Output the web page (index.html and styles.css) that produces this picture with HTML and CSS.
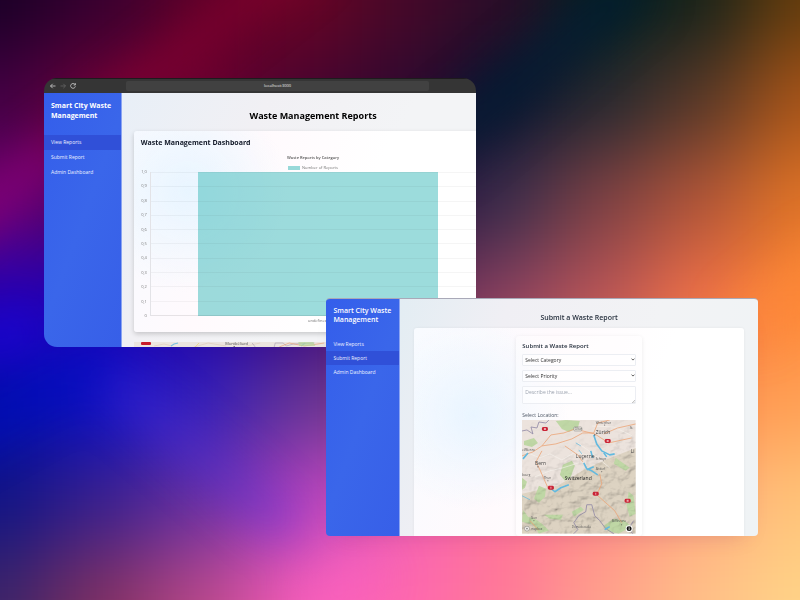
FILE: index.html
```html
<!DOCTYPE html>
<html lang="en">
<head>
<meta charset="utf-8">
<title>Smart City Waste Management</title>
<link rel="stylesheet" href="styles.css">
</head>
<body>
<svg class="wallpaper" viewBox="0 0 800 600" preserveAspectRatio="none" aria-hidden="true">
  <defs>
    <filter id="mesh" filterUnits="userSpaceOnUse" x="-150" y="-150" width="1100" height="900" color-interpolation-filters="sRGB"><feGaussianBlur stdDeviation="38"/></filter>
    <filter id="streak" filterUnits="userSpaceOnUse" x="-150" y="-150" width="1100" height="900" color-interpolation-filters="sRGB"><feGaussianBlur stdDeviation="22"/></filter>
  </defs>
  <g id="cells" filter="url(#mesh)"></g>
  <g filter="url(#streak)" fill="none">
    <path d="M-60 240L310-50" stroke="#8a0030" stroke-width="30" opacity=".75"/>
    <path d="M-40 225L60 150" stroke="#8c0090" stroke-width="30" opacity=".7"/>
    <path d="M-40 345L40 325" stroke="#1c04e0" stroke-width="36" opacity=".7"/>
    <path d="M-60 450L110 355" stroke="#0010c0" stroke-width="28" opacity=".7"/>
    <path d="M110 380L290 530" stroke="#5030e0" stroke-width="34" opacity=".4"/>
    <path d="M430 155L640-20" stroke="#001c34" stroke-width="40" opacity=".85"/>
    <path d="M310 620L370 560" stroke="#ff64c4" stroke-width="50" opacity=".5"/>
    <path d="M740 330L840 250" stroke="#ff8a3a" stroke-width="40" opacity=".6"/>
  </g>
</svg>

<section class="window reports">
  <header class="browser-bar">
    <div class="browser-nav">
      <svg viewBox="0 0 8 8"><path d="M6.500 4H1.500M3.700 1.800L1.500 4L3.700 6.200"/></svg>
      <svg class="dim" viewBox="0 0 8 8"><path d="M1.500 4H6.500M4.300 1.800L6.500 4L4.300 6.200"/></svg>
      <svg viewBox="0 0 8 8"><path d="M6 2.500A2.400 2.400 0 1 0 6.400 4.300M6.400 1.200V3H4.600"/></svg>
    </div>
    <div class="address">localhost:3000</div>
  </header>
  <div class="app">
    <aside class="sidebar">
      <h2>Smart City Waste Management</h2>
      <nav>
        <a href="#" class="active">View Reports</a>
        <a href="#">Submit Report</a>
        <a href="#">Admin Dashboard</a>
      </nav>
    </aside>
    <main class="main">
      <div class="overflowing">
        <h1>Waste Management Reports</h1>
        <div class="card">
          <h3>Waste Management Dashboard</h3>
          <div class="chart-title">Waste Reports by Category</div>
          <div class="legend"><i></i>Number of Reports</div>
          <div class="chart">
            <div class="y-axis"><span>1,0</span><span>0,9</span><span>0,8</span><span>0,7</span><span>0,6</span><span>0,5</span><span>0,4</span><span>0,3</span><span>0,2</span><span>0,1</span><span>0</span></div>
            <div class="plot">
              <div class="bar"></div>
              <div class="lines"><i></i><i></i><i></i><i></i><i></i><i></i><i></i><i></i><i></i><i></i></div>
            </div>
          </div>
          <div class="x-label">undefined</div>
        </div>
        <svg class="map-strip" viewBox="0 0 358 5" preserveAspectRatio="xMinYMin slice">
          <rect width="358" height="5" fill="#ebe5df"/>
          <g fill="none" stroke-width=".6">
            <path d="M20 4L30 2L38 4M60 5L74 1L92 4M112 4L126 1" stroke="#dec9b7"/>
            <path d="M37 4L40 2L44 1M167 4L171 1" stroke="#7bbfdf" stroke-width="1"/>
            <path d="M61 5L65 1" stroke="#e5cb61"/>
            <path d="M118 1L121 5M140 5L141 1L149 1L152 4L159 2L180 1" stroke="#a49bae"/>
            <path d="M145 5L155 1L170 4L190 1" stroke="#e5986b"/>
          </g>
          <path d="M164 0H179L181 4H165Z" fill="#b7d69b" opacity=".7"/>
          <rect x="7" y="0" width="10" height="3" rx="1" fill="#c91c2b"/>
          <text x="91" y="3" class="strip-text">Montbéliard</text>
          <circle cx="100" cy="4.500" r=".6" fill="#333"/>
        </svg>
      </div>
    </main>
  </div>
</section>

<section class="window submit">
  <div class="app">
    <aside class="sidebar">
      <h2>Smart City Waste Management</h2>
      <nav>
        <a href="#">View Reports</a>
        <a href="#" class="active">Submit Report</a>
        <a href="#">Admin Dashboard</a>
      </nav>
    </aside>
    <main class="main">
      <h1>Submit a Waste Report</h1>
      <div class="card">
        <form class="form">
          <h3>Submit a Waste Report</h3>
          <div class="field">
            <select aria-label="Category"><option>Select Category</option></select>
            <svg class="chevron" viewBox="0 0 4 3"><path d="M.5.6L2 2.100L3.500.6"/></svg>
          </div>
          <div class="field">
            <select aria-label="Priority"><option>Select Priority</option></select>
            <svg class="chevron" viewBox="0 0 4 3"><path d="M.5.6L2 2.100L3.500.6"/></svg>
          </div>
          <div class="field">
            <textarea aria-label="Description" placeholder="Describe the issue..."></textarea>
            <svg class="grip" viewBox="0 0 3 3"><path d="M0 3L3 0M1.500 3L3 1.500"/></svg>
          </div>
          <div class="map-label">Select Location:</div>
          <svg class="map" viewBox="0 0 114 114">
            <defs>
              <filter id="relief" x="0" y="0" width="1" height="1">
                <feTurbulence type="fractalNoise" baseFrequency=".09 .12" numOctaves="4" seed="8"/>
                <feDiffuseLighting lighting-color="#fff" surfaceScale="5" diffuseConstant="1.150"><feDistantLight azimuth="225" elevation="58"/></feDiffuseLighting>
              </filter>
              <linearGradient id="fade" x1="0" y1="0" x2=".5" y2="1"><stop offset=".3" stop-color="#fff" stop-opacity=".1"/><stop offset=".65" stop-color="#fff" stop-opacity=".8"/></linearGradient>
              <mask id="alps"><rect width="114" height="114" fill="url(#fade)"/></mask>
            </defs>
            <rect width="114" height="114" fill="#ece3dd"/>
            <path d="M114 28L84 40L62 50L36 66L0 74V114H114Z" fill="#ddd3c2"/>
            <g fill="#bfd7a5">
              <path d="M34 1L44 0L58 1L56 8L47 12L40 9Z"/>
              <path d="M2 21L12 18L16 23L10 27L2 25Z"/>
              <path d="M41 45L50 41L53 46L49 57L43 61L38 55Z"/>
              <path d="M17 66L24 69L23 77L17 83L12 79Z"/>
              <path d="M0 58L5 62L3 68L0 70ZM1 90L6 97L13 99L20 104L27 111L17 114L11 105L0 102Z"/>
              <path d="M22 95L41 95L39 100L28 99ZM50 92L59 87L62 90L52 97Z"/>
              <path d="M107 72L112 76L114 94L108 97L105 86ZM82 106L92 99L103 101L110 107L97 114L87 112ZM94 38L108 48L104 51L92 44Z"/>
            </g>
            <rect width="114" height="114" filter="url(#relief)" mask="url(#alps)" opacity=".42" style="mix-blend-mode:multiply"/>
            <g fill="none" stroke="#f7f3ef" stroke-width=".6">
              <path d="M3 32L18 38L28 34L40 40L54 32L68 36M13 57L28 51L41 48L57 43M56 23L70 33L88 48M70 6L92 7L111 16"/>
            </g>
            <g fill="none" stroke="#eba477" stroke-width=".8">
              <path d="M0 36L11 32L20 26L34 24L50 19L61 13L72 13L76 3L88 0M20 26L29 15L42 13L53 9L73 14M18 50L14 42L20 31M18 50L26 68M61 42L56 35L43 26M73 14L87 23L110 18M82 14L96 8L114 4M78 54L80 64L75 75L84 83L93 91L100 103M8 101L17 111"/>
            </g>
            <g fill="none" stroke="#8e87a5" stroke-width=".8">
              <path d="M0 11L5 10L11 14L9 7L15 8L17 2L24 3L27 0M92 114L84 109L78 101L73 96L70 85L65 85L64 92L57 96L52 103L56 110L52 114M111 114L107 109L112 101"/>
            </g>
            <g fill="none" stroke="#62b9df" stroke-width="1.600" stroke-linejoin="round">
              <path d="M72 15L75 24L80 31L88 35L93 34"/>
              <path d="M62 43L65 49L70 51L76 55M65 50L72 47M69 31L71 38M82 33L85 37M1 39L6 33M27 67L33 72L39 68L47 65M83 110L88 107"/>
              <path d="M54 23L59 26M57 30L60 34M0 76L8 80" stroke-width=".7"/>
            </g>
            <g fill="#ca2436">
              <rect x="20" y="7" width="6" height="4" rx="1.500"/><rect x="83" y="19" width="6" height="4" rx="1.500"/>
              <rect x="26" y="66" width="6" height="4" rx="1.500"/><rect x="71" y="72" width="6" height="4" rx="1.500"/><rect x="103" y="79" width="6" height="4" rx="1.500"/>
            </g>
            <g fill="#fff"><path d="M22 8h2v2h-2zM85 20h2v2h-2zM28.500 67h1v2h-1zM73.500 73h1v2h-1zM105 80h2v2h-2z" opacity=".6"/></g>
            <rect x="52" y="7" width="8" height="4" rx="1" fill="#ede9e0" stroke="#777" stroke-width=".5"/>
            <g fill="#403f41"><circle cx="73" cy="15" r=".6"/><circle cx="16" cy="47" r=".6"/><circle cx="61" cy="39" r=".6"/><circle cx="83" cy="5" r=".5"/><circle cx="80" cy="52" r=".5"/><circle cx="26" cy="61" r=".5"/><circle cx="12" cy="101" r=".5"/><circle cx="100" cy="105" r=".5"/></g>
            <g class="map-text">
              <text x="74" y="4">Winterthur</text><text class="city" x="74" y="14">Zürich</text><text x="53" y="10">Olten</text>
              <text x="0" y="31">el/Bienne</text><text class="city" x="54" y="38">Lucerne</text><text x="74" y="40">Schwyz</text>
              <text class="city" x="13" y="45">Bern</text><text x="0" y="56">bourg</text><text x="22" y="59">Thun</text><text x="74" y="50">Altdorf</text>
              <text class="country" x="43" y="60">Switzerland</text><text class="city" x="109" y="33">Li</text><text x="108" y="9">St.</text>
              <text x="9" y="99">Sion</text><text x="50" y="108">Domodossola</text><text x="90" y="102">Bellinzona</text>
              <text x="9" y="110">mapbox</text>
            </g>
            <circle cx="5" cy="109" r="2.500" fill="#ffffffb0" stroke="#777" stroke-width=".5"/><circle cx="5" cy="109" r=".8" fill="#777"/>
            <circle cx="107.500" cy="109" r="3.500" fill="#fff"/><circle cx="107.500" cy="109" r="2.500" fill="#111"/><path d="M107.500 107.200v.8M107.500 108.500v2" stroke="#fff" stroke-width=".8"/>
          </svg>
        </form>
      </div>
    </main>
  </div>
</section>
<script src="wallpaper.js"></script>
</body>
</html>
```
FILE: styles.css
```css
* { box-sizing: border-box; }
body {
  margin: 0;
  min-height: 100vh;
  position: relative;
  overflow: hidden;
  background: #301040;
  font-family: "Open Sans", "Noto Sans", sans-serif;
  color: #111827;
}
h1, h2, h3 { margin: 0; }
.wallpaper { position: fixed; inset: 0; width: 100%; height: 100%; }

.window { position: absolute; width: 54%; overflow: hidden; }
.reports { left: 5.5%; top: 13%; border-radius: 13px 13px 0 13px; }
.submit {
  left: 40.8%;
  top: 49.7%;
  border-radius: 4px;
  border-top: 1px solid #a9a9b8;
  box-shadow: 0 12px 20px -14px #80206040;
}
.app { display: flex; }

.browser-bar {
  display: flex;
  align-items: center;
  height: 15px;
  padding-left: 5px;
  background: #353535;
  border-top: 1px solid #1d1b1d;
}
.browser-nav { display: flex; gap: 2px; width: 77px; }
.browser-nav svg { width: 8px; height: 8px; fill: none; stroke: #d0d0d0; stroke-width: .8; }
.browser-nav .dim { stroke: #666; }
.address {
  width: 71%;
  height: 10px;
  border-radius: 2px;
  background: #414141;
  color: #eee;
  font-size: 4px;
  line-height: 10px;
  text-align: center;
}

.sidebar {
  flex: none;
  width: 18%;
  background: linear-gradient(110deg, #345eeb, #3a66ea 50%, #375fe8);
  border-right: 1px solid #8ba4f2;
  color: #fff;
}
.sidebar h2 { padding: 8px 0 0 7px; font-size: 7px; line-height: 10px; font-weight: 700; }
.sidebar nav { display: flex; flex-direction: column; margin-top: 14px; }
.sidebar a {
  padding-left: 7px;
  font-size: 5px;
  line-height: 15px;
  color: #eef2ff;
  text-decoration: none;
}
.sidebar .active { background: #3050d8; }

.main {
  flex: 1;
  min-width: 0;
  overflow: hidden;
  background: linear-gradient(120deg, #e8eff7, #f1f0f4 30%, #f3f4f6 60%);
}
.overflowing { width: 108%; padding: 0 12px; }
h1 { text-align: center; }
.reports h1 { padding: 15px 0 7px; font-size: 9px; line-height: 16px; color: #000; }
.reports .card {
  height: 201px;
  padding: 6px 7px;
  border-radius: 3px;
  background: radial-gradient(circle at 15% 30%, #e8f5ff, #e8f5ff00 30%), linear-gradient(110deg, #f8faff, #fffafd 30%, #fff 60%);
  box-shadow: 0 2px 5px #0000002e;
}
.reports h3 { font-size: 7px; line-height: 12px; font-weight: 700; }
.chart-title { margin-top: 6px; text-align: center; font-size: 4px; line-height: 6px; font-weight: 600; color: #555; }
.legend { display: flex; justify-content: center; align-items: center; gap: 2px; margin-top: 4px; font-size: 4px; line-height: 6px; color: #777; }
.legend i { width: 12px; height: 4px; background: #98d9d9; }
.chart { display: flex; height: 144px; margin-top: 1px; }
.y-axis {
  display: flex;
  flex-direction: column;
  justify-content: space-between;
  width: 9px;
  margin: -3px 0;
  padding-right: 3px;
  font-size: 4px;
  line-height: 6px;
  text-align: right;
  color: #777;
}
.plot { flex: 1; display: grid; border-left: 1px solid #e3e3e7; }
.bar, .lines { grid-area: 1 / 1; }
.bar { justify-self: center; width: 72%; background: #4bc0c08c; }
.lines { display: flex; flex-direction: column; border-bottom: 1px solid #00000018; }
.lines i { flex: 1; border-top: 1px solid #0000000a; }
.x-label { margin-top: 2px; padding-left: 9px; text-align: center; font-size: 4px; line-height: 6px; color: #777; }
.map-strip { display: block; width: 100%; height: 5px; margin-top: 10px; }
.strip-text { font-size: 4px; fill: #555; }
.map-text { font-size: 3px; fill: #555; }
.map-text .city { font-size: 5px; fill: #444; }
.map-text .country { font-size: 5px; font-weight: 500; fill: #222; }

.submit .sidebar { width: 17%; }
.submit .sidebar h2 { padding-top: 7px; line-height: 9px; font-weight: 600; }
.submit .sidebar nav { margin-top: 13px; }
.submit .sidebar a { line-height: 14px; }
.submit .main { padding: 0 14px; background: linear-gradient(110deg, #e3edf3, #f0eff4 25%, #f2f3f5 60%, #eff3f5); }
.submit h1 { padding: 11px 0 3px; font-size: 7px; line-height: 15px; font-weight: 600; color: #1f2937; }
.submit .card {
  padding-top: 8px;
  border-radius: 3px 3px 0 0;
  background: radial-gradient(circle at 18% 42%, #e9f5ff, #e9f5ff00 32%), linear-gradient(110deg, #f8fbff, #fffafd 35%, #fff 65%);
  box-shadow: 0 0 3px #0000000f;
}
.form {
  display: flex;
  flex-direction: column;
  width: 38%;
  margin: 0 auto;
  padding: 5px 6px 2px;
  border-radius: 3px;
  background: #ffffff50;
  box-shadow: 0 1px 4px #00000014;
}
.form h3 { margin-bottom: 3px; font-size: 6px; line-height: 10px; font-weight: 600; color: #1f2937; }
.field { position: relative; display: flex; margin-bottom: 4px; }
.field select, .field textarea {
  appearance: none;
  display: block;
  width: 100%;
  margin: 0;
  border: 1px solid #eceef3;
  border-radius: 1px;
  outline: 0;
  background: #ffffff80;
  color: #333;
  font-family: inherit;
  font-size: 5px;
}
.field select { height: 12px; padding: 0 2px; line-height: 8px; }
.field textarea { height: 18px; padding: 2px; line-height: 7px; resize: none; }
.field textarea::placeholder { color: #9ca3af; }
.chevron { position: absolute; right: 1px; top: 4px; width: 4px; height: 3px; fill: none; stroke: #333; stroke-width: .8; }
.grip { position: absolute; right: 1px; bottom: 1px; width: 3px; height: 3px; fill: none; stroke: #888; stroke-width: .5; }
.map-label { margin-top: 2px; font-size: 5px; line-height: 10px; color: #4b5563; }
.map { display: block; width: 100%; }
```
FILE: wallpaper.js
```js
// Coarse colour mesh, one row per 100 units, blurred by the SVG filter.
const mesh = [
  ["#190026", "#360030", "#5c0028", "#6c0424", "#480828", "#2c0c28", "#04201f", "#16221a", "#643c0c"],
  ["#420044", "#6c0038", "#700030", "#480430", "#300830", "#0c142e", "#242830", "#583828", "#a85418"],
  ["#6c0074", "#480060", "#400050", "#300040", "#200838", "#382c4c", "#7c4044", "#b05438", "#e07426"],
  ["#2400b4", "#2000b8", "#2000a0", "#300080", "#582050", "#884060", "#b85458", "#f07048", "#ff8834"],
  ["#000cac", "#0c10c4", "#3420bc", "#603494", "#904080", "#d06060", "#f07850", "#ff9050", "#ffa054"],
  ["#101484", "#38208c", "#6830a0", "#b040c0", "#f060b8", "#ff7098", "#ff8c88", "#ffac80", "#ffc478"],
  ["#3c2468", "#803060", "#b84888", "#f45cb8", "#ff68b0", "#ff7898", "#ffa08c", "#ffc088", "#ffd488"]
];
const cells = document.getElementById("cells");
const last = { x: mesh[0].length - 1, y: mesh.length - 1 };
for (let y = -1; y <= last.y + 1; y++) {
  for (let x = -1; x <= last.x + 1; x++) {
    const rect = document.createElementNS("http://www.w3.org/2000/svg", "rect");
    rect.setAttribute("x", x * 100 - 50);
    rect.setAttribute("y", y * 100 - 50);
    rect.setAttribute("width", 101);
    rect.setAttribute("height", 101);
    rect.setAttribute("fill", mesh[Math.min(Math.max(y, 0), last.y)][Math.min(Math.max(x, 0), last.x)]);
    cells.appendChild(rect);
  }
}
```
